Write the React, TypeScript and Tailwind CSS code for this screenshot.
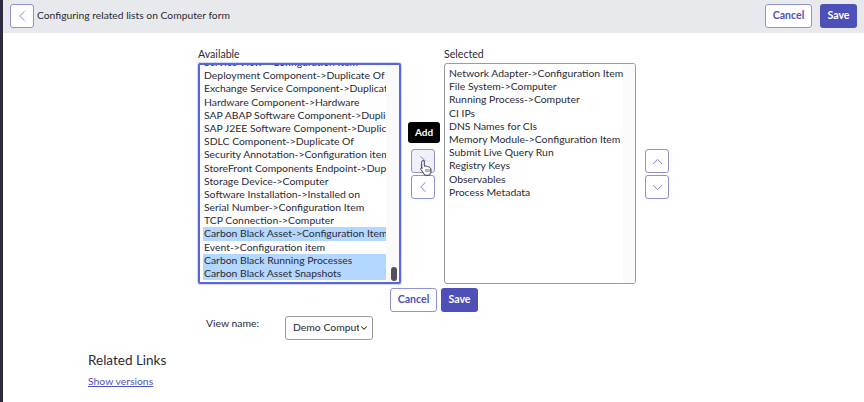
import React from 'react';
import { ChevronLeft, ChevronRight, ChevronUp, ChevronDown } from 'lucide-react';

const available = [
  { label: 'Deployment Component->Duplicate Of' },
  { label: 'Exchange Service Component->Duplicate Of' },
  { label: 'Hardware Component->Hardware' },
  { label: 'SAP ABAP Software Component->Duplicate Of' },
  { label: 'SAP J2EE Software Component->Duplicate Of' },
  { label: 'SDLC Component->Duplicate Of' },
  { label: 'Security Annotation->Configuration item' },
  { label: 'StoreFront Components Endpoint->Duplicate Of' },
  { label: 'Storage Device->Computer' },
  { label: 'Software Installation->Installed on' },
  { label: 'Serial Number->Configuration Item' },
  { label: 'TCP Connection->Computer' },
  { label: 'Carbon Black Asset->Configuration Item', selected: true },
  { label: 'Event->Configuration item' },
  { label: 'Carbon Black Running Processes', selected: true },
  { label: 'Carbon Black Asset Snapshots', selected: true },
];

const selected = [
  'Network Adapter->Configuration Item',
  'File System->Computer',
  'Running Process->Computer',
  'CI IPs',
  'DNS Names for CIs',
  'Memory Module->Configuration Item',
  'Submit Live Query Run',
  'Registry Keys',
  'Observables',
  'Process Metadata',
];

const IconBtn = ({ children, className = 'bg-white' }: { children: React.ReactNode; className?: string }) => (
  <button className={`w-[24px] h-[24px] rounded-[3px] border border-[#8e92d8] text-[#6f74cc] flex items-center justify-center ${className}`}>
    {children}
  </button>
);

const CancelBtn = () => (
  <button className="w-[47px] h-[24px] rounded-[3px] border border-[#8e92d8] bg-white text-[#4f52bd] text-[10.6px] font-bold">
    Cancel
  </button>
);

const SaveBtn = () => (
  <button className="w-[37px] h-[24px] rounded-[3px] bg-[#4d50b8] text-white text-[10.6px] font-bold">
    Save
  </button>
);

export default function App() {
  return (
    <div className="w-[864px] h-[402px] flex overflow-hidden bg-white text-[#2a2a34] font-['Lato','Liberation_Sans',sans-serif]">
      <div className="w-[3px] bg-[#2b2b3f]" />
      <div className="flex-1 flex flex-col">
        {/* Header */}
        <div className="h-[33px] bg-[#e8e9ec] flex items-center pl-[7px] pr-[7px] pb-[2px]">
          <IconBtn><ChevronLeft size={18} strokeWidth={1.2} /></IconBtn>
          <span className="ml-[3px] text-[10.3px]">Configuring related lists on Computer form</span>
          <div className="ml-auto flex gap-[8px]">
            <CancelBtn />
            <SaveBtn />
          </div>
        </div>

        {/* Slushbucket */}
        <div className="flex pl-[195px] pt-[13px]">
          <div className="w-[203px]">
            <div className="text-[10.6px] leading-[17px]">Available</div>
            <div className="h-[221px] rounded-[2px] border-2 border-[#5a66dc] flex overflow-hidden shadow-[0_0_0_1px_#d5d8f5]">
              <div className="w-[186px] pl-[3px] overflow-hidden">
                <div className="-mt-[9px] h-[13.2px] pl-[1px] text-[10.4px] leading-[13.2px] whitespace-nowrap overflow-hidden">
                  Service View-&gt;Configuration Item
                </div>
                {available.map((a) => (
                  <div
                    key={a.label}
                    className={`h-[13.2px] pl-[1px] text-[10.4px] leading-[13.2px] whitespace-nowrap overflow-hidden ${a.selected ? 'bg-[#b3d7ff]' : ''}`}
                  >
                    {a.label}
                  </div>
                ))}
              </div>
              <div className="flex-1 bg-[#fafafa] flex items-end justify-center pl-[3px] pb-[1px]">
                <div className="w-[6px] h-[14px] rounded-full bg-[#50505e]" />
              </div>
            </div>
          </div>

          <div className="w-[43px] relative flex flex-col items-center pt-[103px] gap-[2px]">
            <div className="absolute left-[7px] top-[76px] w-[32px] h-[21px] rounded-[3px] bg-black text-white text-[10px] font-bold flex items-center justify-center">
              Add
            </div>
            <IconBtn className="bg-[#f0f1f8]"><ChevronRight size={18} strokeWidth={1.2} /></IconBtn>
            <IconBtn className="bg-white"><ChevronLeft size={18} strokeWidth={1.2} /></IconBtn>
            <svg className="absolute left-[18px] top-[113px]" width="15" height="17" viewBox="0 0 15 17">
              <path
                d="M4 1.5c.8 0 1.3.6 1.3 1.3v4.4l1-.2 1 .2 1 .3 1.2.3 1.2.6c.9.5 1.3 1.2 1.3 2.1v2.2c0 .8-.4 1.6-1 2.2l-.4 1.3H5.6l-.5-1.2L2 10.6c-.4-.5-.4-1.2 0-1.6.5-.4 1.1-.3 1.6.1l-.9-.1V2.8C2.7 2.1 3.2 1.5 4 1.5z"
                fill="#fff"
                stroke="#2e2e38"
                strokeWidth="0.9"
                strokeLinejoin="round"
              />
              <path d="M7 10v3M9 10v3M11 10v3" stroke="#2e2e38" strokeWidth="0.7" />
            </svg>
          </div>

          <div className="w-[192px]">
            <div className="text-[10.6px] leading-[17px]">Selected</div>
            <div className="h-[221px] rounded-[3px] border border-[#9a9aa2] flex overflow-hidden">
              <div className="w-[178px] pl-[4px] pt-[3px]">
                {selected.map((s) => (
                  <div key={s} className="h-[13.2px] text-[10.4px] leading-[13.2px] whitespace-nowrap overflow-hidden">
                    {s}
                  </div>
                ))}
              </div>
              <div className="flex-1 bg-[#fafafa]" />
            </div>
          </div>

          <div className="ml-[9px] pt-[103px] flex flex-col gap-[2px]">
            <IconBtn><ChevronUp size={17} strokeWidth={1.2} /></IconBtn>
            <IconBtn><ChevronDown size={17} strokeWidth={1.2} /></IconBtn>
          </div>
        </div>

        {/* Form buttons */}
        <div className="flex gap-[4px] pl-[387px] pt-[4px]">
          <CancelBtn />
          <SaveBtn />
        </div>

        {/* View name */}
        <div className="flex items-start pl-[203px] pt-[4px]">
          <div className="w-[79px] text-[10.4px] leading-[14px]">View name:</div>
          <div className="w-[88px] h-[24px] rounded-[3px] border border-[#9a9aa2] bg-[#fcfcfc] flex items-center pl-[7px] pr-[3px] text-[10.4px]">
            <span className="flex-1 whitespace-nowrap overflow-hidden">Demo Comput</span>
            <ChevronDown size={10} strokeWidth={2.5} />
          </div>
        </div>

        {/* Related links */}
        <div className="pl-[85px] pt-[11px]">
          <div className="text-[13.5px] leading-[18px]">Related Links</div>
          <a className="block mt-[5px] text-[10.4px] leading-[14px] text-[#4f52bd] underline">Show versions</a>
        </div>
      </div>
    </div>
  );
}
